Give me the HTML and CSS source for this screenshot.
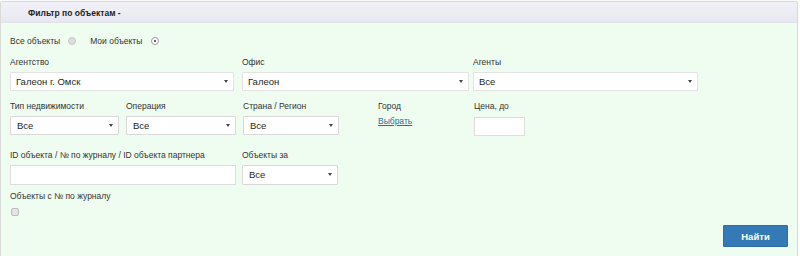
FILE: index.html
```html
<!DOCTYPE html>
<html lang="ru">
<head>
    <meta charset="UTF-8">
    <title>Фильтр по объектам</title>
    <link rel="stylesheet" href="styles.css">
</head>
<body>
    <div class="panel">
        <div class="panel-heading">Фильтр по объектам -</div>
        <div class="panel-body">
            <div class="radio-row">
                <span class="radio-label">Все объекты</span>
                <span class="radio"></span>
                <span class="radio-label second">Мои объекты</span>
                <span class="radio checked"></span>
            </div>

            <div class="row row-1">
                <div class="field w-agency">
                    <label>Агентство</label>
                    <div class="select tall">Галеон г. Омск<span class="arrow"></span></div>
                </div>
                <div class="field w-office">
                    <label>Офис</label>
                    <div class="select tall">Галеон<span class="arrow"></span></div>
                </div>
                <div class="field w-agents">
                    <label>Агенты</label>
                    <div class="select tall">Все<span class="arrow"></span></div>
                </div>
            </div>

            <div class="row row-2">
                <div class="field w-type">
                    <label>Тип недвижимости</label>
                    <div class="select">Все<span class="arrow"></span></div>
                </div>
                <div class="field w-operation">
                    <label>Операция</label>
                    <div class="select">Все<span class="arrow"></span></div>
                </div>
                <div class="field w-region">
                    <label>Страна / Регион</label>
                    <div class="select">Все<span class="arrow"></span></div>
                </div>
                <div class="field w-city">
                    <label>Город</label>
                    <a href="#" class="link">Выбрать</a>
                </div>
                <div class="field w-price">
                    <label>Цена, до</label>
                    <div class="input price"></div>
                </div>
            </div>

            <div class="row row-3">
                <div class="field w-id">
                    <label>ID объекта / № по журналу / ID объекта партнера</label>
                    <div class="input"></div>
                </div>
                <div class="field w-period">
                    <label>Объекты за</label>
                    <div class="select wide">Все<span class="arrow"></span></div>
                </div>
            </div>

            <div class="check-field">
                <label>Объекты с № по журналу</label>
                <span class="checkbox"></span>
            </div>

            <div class="actions">
                <button type="button" class="btn">Найти</button>
            </div>
        </div>
    </div>
</body>
</html>
```

FILE: styles.css
```css
body {
    margin: 0;
    padding: 1px 0 0 0;
    font-family: Arial, "Liberation Sans", sans-serif;
    font-size: 8.5px;
    color: #333333;
    background-color: #ffffff;
}
.panel {
    width: 796px;
    height: 262px;
    border: 1px solid #dadada;
    border-radius: 2px;
    background-color: #eefdef; /* Light green */
    box-shadow: 0 0 2px rgba(0, 0, 0, 0.08);
    overflow: hidden;
}
.panel-heading {
    height: 20px;
    line-height: 22px;
    padding-left: 27px;
    font-weight: bold;
    font-size: 8.5px;
    color: #1e1e1e;
    background: linear-gradient(#f1f1f7, #e8e8f0);
    border-bottom: 1px solid #e2e2ea;
}
.panel-body {
    padding: 12px 9px 0 9px;
}
.radio-row {
    display: flex;
    align-items: center;
    height: 12px;
}
.radio-label {
    margin-right: 8px;
}
.radio-label.second {
    margin-left: 14px;
    margin-right: 9px;
}
.radio {
    box-sizing: border-box;
    width: 8px;
    height: 8px;
    border: 1px solid #c6c6c6;
    border-radius: 50%;
    background-color: #dcdcdc;
    position: relative;
}
.radio.checked {
    background-color: #ffffff;
    border-color: #a0a0a0;
}
.radio.checked::after {
    content: "";
    position: absolute;
    left: 2px;
    top: 2px;
    width: 2px;
    height: 2px;
    border-radius: 50%;
    background-color: #333333;
}
.row {
    display: flex;
    align-items: flex-start;
}
.row-1 { margin-top: 9px; }
.row-2 { margin-top: 9px; }
.row-3 { margin-top: 13px; }
.field {
    display: flex;
    flex-direction: column;
}
.field label {
    height: 12px;
    line-height: 12px;
    margin-bottom: 4px;
    white-space: nowrap;
}
.w-agency { width: 224px; }
.w-office { width: 227px; margin-left: 8px; }
.w-agents { width: 225px; margin-left: 4px; }
.w-type { width: 109px; }
.w-operation { width: 110px; margin-left: 7px; }
.w-region { width: 96px; margin-left: 7px; }
.w-city { width: 95px; margin-left: 39px; }
.w-price { width: 51px; margin-left: 1px; }
.w-id { width: 226px; }
.w-period { width: 96px; margin-left: 6px; }
.select {
    position: relative;
    box-sizing: border-box;
    height: 19px;
    line-height: 17px;
    background-color: #ffffff;
    border: 1px solid #d9d9d9;
    border-radius: 1px;
    font-size: 9.5px;
    color: #1f1f1f;
    padding-left: 6px;
}
.select.tall {
    border-color: #e3e3e3;
    padding-left: 5px;
}
.select.wide {
    height: 20px;
    line-height: 18px;
}
.arrow {
    position: absolute;
    right: 5px;
    top: 7px;
    width: 0;
    height: 0;
    border-left: 2px solid transparent;
    border-right: 2px solid transparent;
    border-top: 3px solid #444444;
}
.input {
    box-sizing: border-box;
    height: 20px;
    background-color: #ffffff;
    border: 1px solid #dedede;
}
.input.price {
    height: 19px;
    margin-top: 1px;
}
.link {
    color: #2b6e9e;
    text-decoration: underline;
    line-height: 12px;
    margin-top: -1px;
}
.check-field {
    margin-top: 5px;
}
.check-field label {
    display: block;
    height: 12px;
    line-height: 12px;
}
.checkbox {
    display: block;
    box-sizing: border-box;
    margin-top: 6px;
    margin-left: 1px;
    width: 8px;
    height: 8px;
    border: 1px solid #bcbcbc;
    border-radius: 2px;
    background-color: #e4e4e4;
}
.actions {
    display: flex;
    justify-content: flex-end;
    margin-top: 9px;
    padding-right: 0;
}
.btn {
    width: 65px;
    height: 22px;
    padding: 0;
    background-color: #337ab7; /* Blue */
    border: 1px solid #2e6da4;
    border-radius: 1px;
    color: #ffffff;
    font-family: Arial, "Liberation Sans", sans-serif;
    font-size: 9.5px;
    font-weight: bold;
    cursor: pointer;
}
```
